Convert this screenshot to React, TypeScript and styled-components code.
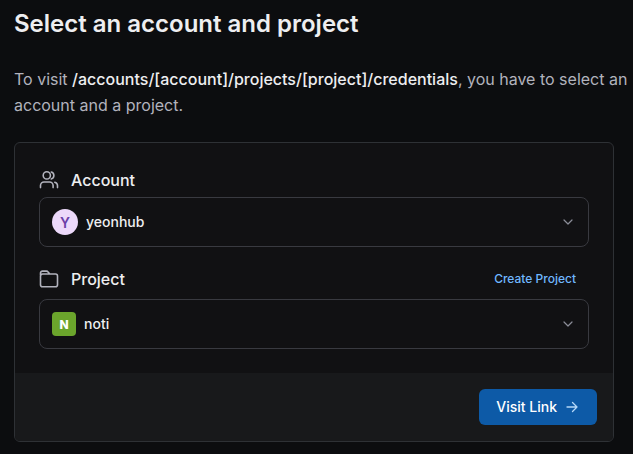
import React, { useState } from "react";
import styled, { createGlobalStyle } from "styled-components";

const GlobalStyle = createGlobalStyle`
  * { box-sizing: border-box; }
  body {
    margin: 0;
    background: #0c0d0f;
    color: #eeeef0;
    font-family: Inter, "Liberation Sans", sans-serif;
    font-size: 16px;
  }
`;

const Page = styled.main`
  padding: 8px 4px 12px 14px;
`;

const Title = styled.h1`
  margin: 0;
  font-size: 24px;
  line-height: 32px;
  font-weight: 600;
`;

const Intro = styled.p`
  margin: 26px 0 24px;
  font-size: 16px;
  line-height: 26px;
  color: #b2b3bd;

  strong {
    color: #eeeef0;
    font-weight: 500;
  }
`;

const Card = styled.form`
  margin-right: 15px;
  border: 1px solid #2e3135;
  border-radius: 6px;
  overflow: hidden;
  background: #111113;
`;

const Fields = styled.div`
  display: flex;
  flex-direction: column;
  gap: 16px;
  padding: 24px;
`;

const Field = styled.div`
  display: flex;
  flex-direction: column;
  gap: 4px;
`;

const FieldHeader = styled.div`
  display: flex;
  align-items: center;
  justify-content: space-between;
  padding-right: 13px;
`;

const FieldLabel = styled.label`
  display: flex;
  align-items: center;
  gap: 12px;
  font-size: 16px;
  line-height: 26px;
  font-weight: 500;

  svg { color: #b2b3bd; }
`;

const CreateLink = styled.a`
  color: #70b8ff;
  font-size: 12px;
  line-height: 32px;
  font-weight: 500;
  text-decoration: none;
`;

const SelectBox = styled.div`
  display: flex;
  align-items: center;
  gap: 8px;
  height: 50px;
  padding: 0 12px;
  border: 1px solid #393a40;
  border-radius: 8px;
`;

const Avatar = styled.span<{ $round?: boolean }>`
  display: grid;
  place-items: center;
  width: ${(p) => (p.$round ? 26 : 24)}px;
  height: ${(p) => (p.$round ? 26 : 24)}px;
  border-radius: ${(p) => (p.$round ? "50%" : "4px")};
  background: ${(p) => (p.$round ? "#ecd9fa" : "#6ba52c")};
  color: ${(p) => (p.$round ? "#6b3fa8" : "#ffffff")};
  font-size: ${(p) => (p.$round ? 14 : 12)}px;
  font-weight: ${(p) => (p.$round ? 600 : 800)};
`;

const Select = styled.select`
  flex: 1;
  min-width: 0;
  height: 100%;
  padding: 0;
  border: 0;
  outline: 0;
  appearance: none;
  background: transparent;
  color: #eeeef0;
  font: 500 14px/20px Inter, "Liberation Sans", sans-serif;

  option { background: #111113; }
`;

const Footer = styled.footer`
  display: flex;
  justify-content: flex-end;
  padding: 16px;
  background: #18191b;
`;

const VisitButton = styled.button`
  display: flex;
  align-items: center;
  gap: 7px;
  height: 36px;
  padding: 0 17px;
  border: 0;
  border-radius: 6px;
  background: #0d5aa7;
  color: #ffffff;
  font: 500 14px/20px Inter, "Liberation Sans", sans-serif;

  svg { color: #b5d8f8; }
`;

const stroke = {
  fill: "none",
  stroke: "currentColor",
  strokeWidth: 1.6,
  strokeLinecap: "round",
  strokeLinejoin: "round",
} as const;

const UsersIcon = () => (
  <svg width="20" height="20" viewBox="0 0 20 20" aria-hidden="true" {...stroke}>
    <circle cx="7.8" cy="5.4" r="3.6" />
    <path d="M1.5 17.6v-2.1a3.5 3.5 0 0 1 3.5-3.5h5.6a3.5 3.5 0 0 1 3.5 3.5v2.1M12.3 2a3.6 3.6 0 0 1 0 6.9M15.8 12.2a3.5 3.5 0 0 1 2.7 3.4v2" />
  </svg>
);

const FolderIcon = () => (
  <svg width="20" height="20" viewBox="0 0 20 20" aria-hidden="true" {...stroke}>
    <path d="M1.5 6V4.1A2 2 0 0 1 3.5 2.1h4a2 2 0 0 1 1.6.8L10.8 5h5.7a2 2 0 0 1 2 2v8.7a2 2 0 0 1-2 2h-13a2 2 0 0 1-2-2V7a2 2 0 0 1 2-2h7.3" />
  </svg>
);

const ChevronIcon = () => (
  <svg width="16" height="16" viewBox="0 0 16 16" aria-hidden="true" color="#8b8d98" {...stroke} strokeWidth={1.2}>
    <path d="M4 6l4 4 4-4" />
  </svg>
);

const ArrowIcon = () => (
  <svg width="16" height="16" viewBox="0 0 16 16" aria-hidden="true" {...stroke} strokeWidth={1.3}>
    <path d="M3 8h10M8.5 3.5L13 8l-4.5 4.5" />
  </svg>
);

export default function App() {
  const [account, setAccount] = useState("yeonhub");
  const [project, setProject] = useState("noti");

  return (
    <Page>
      <GlobalStyle />
      <Title>Select an account and project</Title>
      <Intro>
        To visit <strong>/accounts/[account]/projects/[project]/credentials</strong>, you have to
        select an account and a project.
      </Intro>
      <Card onSubmit={(e) => e.preventDefault()}>
        <Fields>
          <Field>
            <FieldHeader>
              <FieldLabel htmlFor="account"><UsersIcon />Account</FieldLabel>
            </FieldHeader>
            <SelectBox>
              <Avatar $round aria-hidden="true">Y</Avatar>
              <Select id="account" value={account} onChange={(e) => setAccount(e.target.value)}>
                <option>yeonhub</option>
              </Select>
              <ChevronIcon />
            </SelectBox>
          </Field>
          <Field>
            <FieldHeader>
              <FieldLabel htmlFor="project"><FolderIcon />Project</FieldLabel>
              <CreateLink href="#create-project">Create Project</CreateLink>
            </FieldHeader>
            <SelectBox>
              <Avatar aria-hidden="true">N</Avatar>
              <Select id="project" value={project} onChange={(e) => setProject(e.target.value)}>
                <option>noti</option>
              </Select>
              <ChevronIcon />
            </SelectBox>
          </Field>
        </Fields>
        <Footer>
          <VisitButton type="submit">Visit Link<ArrowIcon /></VisitButton>
        </Footer>
      </Card>
    </Page>
  );
}
